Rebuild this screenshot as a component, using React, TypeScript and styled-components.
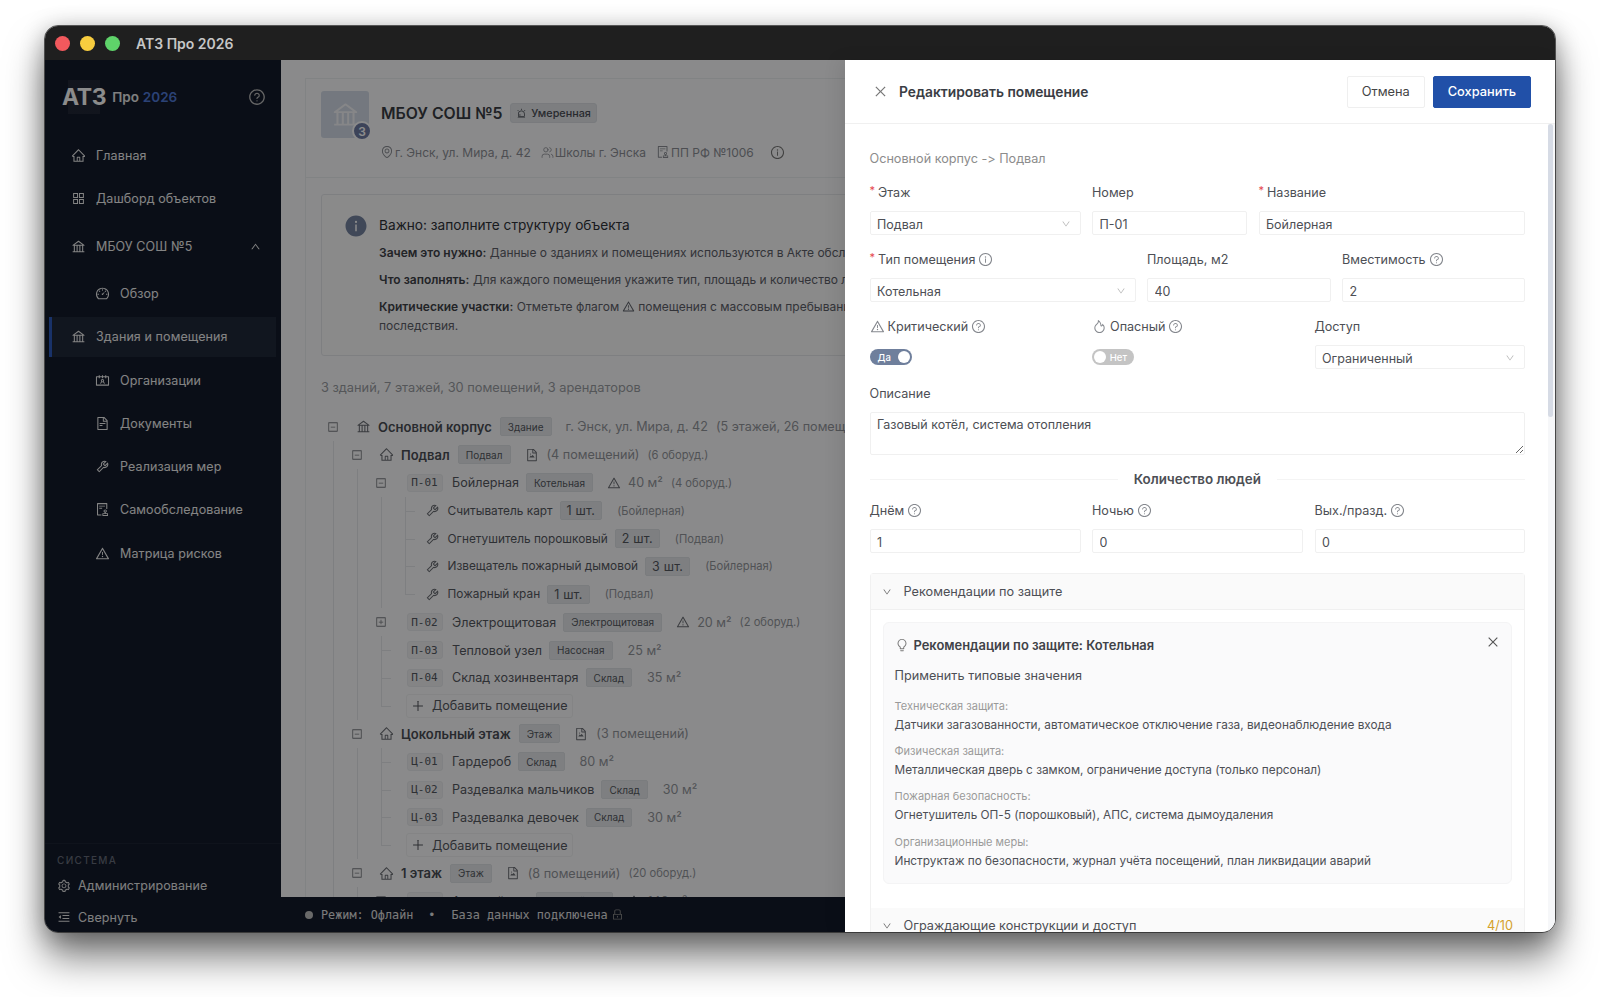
import React from 'react';
import styled, { createGlobalStyle, css } from 'styled-components';
import {
    AiFillInfoCircle,
    AiOutlineAlert,
    AiOutlineAppstore,
    AiOutlineAudit,
    AiOutlineBank,
    AiOutlineBulb,
    AiOutlineClose,
    AiOutlineContacts,
    AiOutlineDashboard,
    AiOutlineDown,
    AiOutlineEnvironment,
    AiOutlineFileImage,
    AiOutlineFileText,
    AiOutlineFire,
    AiOutlineHome,
    AiOutlineInfoCircle,
    AiOutlineLock,
    AiOutlineMenuFold,
    AiOutlineMinusSquare,
    AiOutlinePlus,
    AiOutlinePlusSquare,
    AiOutlineQuestionCircle,
    AiOutlineSetting,
    AiOutlineTool,
    AiOutlineUp,
    AiOutlineWarning,
} from 'react-icons/ai';
import { Users } from 'lucide-react';

const guide = '#e6e8eb';
const sans = 'Inter, "Noto Sans", sans-serif';
const mono = '"DejaVu Sans Mono", "Liberation Mono", monospace';

const GlobalStyle = createGlobalStyle`
    html, body { margin: 0; padding: 0; background: #fff; }
    * { box-sizing: border-box; }
    body { font-family: ${sans}; font-variant-ligatures: none; font-feature-settings: "calt" 0; overflow: hidden; }
`;

const Page = styled.div`
    width: 1600px;
    height: 997px;
    padding: 26px 45px 65px;
    background: #fff;
`;

const Window = styled.div`
    width: 100%;
    height: 100%;
    display: flex;
    flex-direction: column;
    border-radius: 13px;
    overflow: hidden;
    outline: 1px solid rgba(40, 40, 40, 0.75);
`;

const WindowShadow = styled.div`
    height: 100%;
    border-radius: 13px;
    box-shadow: 0 26px 38px rgba(0, 0, 0, 0.5), 0 4px 24px rgba(0, 0, 0, 0.32);
`;

const TitleBar = styled.div`
    height: 34px;
    flex: none;
    display: flex;
    align-items: center;
    padding-left: 10px;
    background: #1f1f1f;
    color: #c6c6c6;
    font-size: 14px;
    font-weight: 600;
`;

const Light = styled.span<{ $color: string }>`
    width: 15px;
    height: 15px;
    margin-right: 10px;
    border-radius: 50%;
    background: ${(p) => p.$color};
`;

const AppTitle = styled.span`
    margin-left: 6px;
`;

const Shell = styled.div`
    position: relative;
    flex: 1;
    min-height: 0;
    display: flex;
`;

const Sidebar = styled.aside`
    width: 236px;
    flex: none;
    display: flex;
    flex-direction: column;
    background: #131a2a;
    color: #f2f2f2;
`;

const Brand = styled.div`
    height: 75px;
    display: flex;
    align-items: center;
    padding: 0 0 2px 17px;
`;

const BrandMark = styled.span`
    font-size: 23px;
    font-weight: 700;
    letter-spacing: -0.4px;
    padding: 3px 6px 3px 0;
    color: #fff;
    background: linear-gradient(90deg, transparent 6px, rgba(255, 255, 255, 0.06) 6px, rgba(255, 255, 255, 0.06) 38px, transparent 38px);
`;

const BrandName = styled.span`
    font-size: 13.5px;
    font-weight: 600;
    color: #e8e8e8;
`;

const BrandYear = styled.span`
    margin-left: 4px;
    color: #4f79d8;
`;

const BrandHelp = styled.span`
    margin-left: auto;
    margin-right: 15px;
    display: flex;
    font-size: 18px;
    color: #bbb;
`;

const Nav = styled.nav`
    display: flex;
    flex-direction: column;
    gap: 3.3px;
`;

const NavItem = styled.div<{ $sub?: boolean; $active?: boolean; $group?: boolean }>`
    height: 40px;
    flex: none;
    display: flex;
    align-items: center;
    margin: 0 5px 0 4px;
    padding-left: ${(p) => (p.$sub ? '46px' : '22px')};
    gap: 10px;
    font-size: 12.5px;
    color: #f0f0f0;
    letter-spacing: 0.1px;

    ${(p) => p.$group && css`
        margin-top: 5.3px;
        margin-bottom: 3.3px;
    `}
    ${(p) => p.$active && css`
        background: #20283a;
        box-shadow: inset 3px 0 0 #2f5cc0;
    `}

    svg {
        flex: none;
        font-size: 15px;
    }
`;

const NavChevron = styled.span`
    margin-left: auto;
    margin-right: 15px;
    display: flex;

    svg {
        font-size: 11px;
    }
`;

const SidebarFooter = styled.div`
    margin-top: auto;
    height: 89px;
    padding: 5px 0 0 12px;
    border-top: 1px solid #1c2333;
`;

const FooterTitle = styled.div`
    height: 21px;
    display: flex;
    align-items: center;
    font-size: 10px;
    font-weight: 500;
    letter-spacing: 1.3px;
    color: #666c7a;
`;

const FooterItem = styled.div`
    height: 31.5px;
    display: flex;
    align-items: center;
    gap: 7px;
    font-size: 12.5px;
    color: #e8e8e8;
    letter-spacing: 0.1px;

    svg {
        font-size: 14px;
    }
`;

const Content = styled.div`
    flex: 1;
    min-width: 0;
    margin-right: 710px;
    overflow: hidden;
    display: flex;
    flex-direction: column;
`;

const Main = styled.main`
    flex: 1;
    min-height: 0;
    overflow: hidden;
    padding: 18px 0 0 24px;
    background: #fcfcfd;
`;

const MainCard = styled.div`
    width: 1240px;
    border: 1px solid #eceef1;
    background: #fcfcfd;
`;

const ObjectHead = styled.div`
    height: 99px;
    display: flex;
    padding: 12px 0 0 15px;
    border-bottom: 1px solid #eceef1;
`;

const ObjectIcon = styled.div`
    position: relative;
    width: 48px;
    height: 47px;
    margin-right: 12px;
    display: flex;
    align-items: center;
    justify-content: center;
    background: #d3dbe8;
    border-radius: 3px;
    color: #f4f5f7;
    font-size: 29px;
`;

const ObjectCount = styled.span`
    position: absolute;
    right: -3px;
    bottom: -3px;
    width: 20px;
    height: 20px;
    display: flex;
    align-items: center;
    justify-content: center;
    border-radius: 50%;
    background: #6d7ba3;
    border: 2px solid #fcfcfd;
    color: #fff;
    font-size: 12px;
    font-weight: 600;
`;

const ObjectInfo = styled.div`
    display: flex;
    flex-direction: column;
`;

const ObjectTitle = styled.div`
    height: 24px;
    display: flex;
    align-items: center;
    gap: 8px;
    margin-top: 10px;
    font-size: 15.8px;
    font-weight: 600;
    color: #3a3d44;
`;

const Pill = styled.span`
    height: 20px;
    display: inline-flex;
    align-items: center;
    gap: 4px;
    padding: 0 5px;
    border-radius: 3px;
    background: #e3e6ea;
    border: 1px solid #dcdfe4;
    font-size: 10.8px;
    font-weight: 500;
    color: #4a4d55;
`;

const ObjectMeta = styled.div`
    margin: 16px 0 0 -1px;
    display: flex;
    align-items: center;
    height: 22px;
    font-size: 12px;
    color: #8c8f96;
`;

const MetaItem = styled.span`
    display: inline-flex;
    align-items: center;
    gap: 1px;
    margin-right: 10px;

    svg {
        font-size: 14px;
    }
`;

const MetaInfo = styled.span`
    display: flex;
    margin-left: 6px;
    font-size: 15px;
    color: #777;
`;

const Alert = styled.div`
    margin: 16px 0 0 15px;
    width: 1200px;
    height: 162px;
    padding: 19px 0 0 22px;
    display: flex;
    border: 1px solid #e6e8ec;
    background: #fbfbfc;
    border-radius: 3px;
`;

const AlertIcon = styled.span`
    display: flex;
    margin-right: 11px;
    font-size: 24px;
    height: 24px;
    color: #7684a0;
`;

const AlertBody = styled.div`
    flex: 1;
`;

const AlertTitle = styled.div`
    height: 21px;
    display: flex;
    align-items: center;
    font-size: 13.7px;
    color: #2f3238;
`;

const AlertLine = styled.div<{ $tight?: boolean }>`
    height: 19px;
    margin-top: ${(p) => (p.$tight ? '0' : '8px')};
    display: flex;
    align-items: center;
    white-space: nowrap;
    font-size: 12px;
    color: #5d6068;

    b {
        font-weight: 600;
        color: #3f4248;
        margin-right: 3.5px;
    }

    svg {
        margin: 0 3px;
        font-size: 13px;
    }
`;

const Stats = styled.div`
    margin: 21px 0 16px 15px;
    height: 20px;
    display: flex;
    align-items: center;
    font-size: 12.8px;
    color: #9a9da3;
`;

const Tree = styled.div`
    margin-left: 20.5px;
    font-size: 12.6px;
    color: #55585f;
`;

const Row = styled.div`
    height: 27.9px;
    display: flex;
    align-items: center;
    white-space: nowrap;
`;

const Switcher = styled.span<{ $leaf?: boolean; $last?: boolean; $gap: number }>`
    position: relative;
    width: 12px;
    flex: none;
    align-self: stretch;
    margin-right: ${(p) => p.$gap}px;
    display: flex;
    align-items: center;
    justify-content: center;
    font-size: 14px;
    color: #777a80;

    ${(p) => p.$leaf && css`
        &::before {
            content: '';
            position: absolute;
            left: 6px;
            top: 0;
            bottom: ${p.$last ? '50%' : '0'};
            border-left: 1px solid ${guide};
        }
        &::after {
            content: '';
            position: absolute;
            left: 6px;
            top: 50%;
            width: 10px;
            border-top: 1px solid ${guide};
        }
    `}
`;

const Branch = styled.div`
    margin-left: 6px;
    padding-left: 17px;
    border-left: 1px solid ${guide};
`;

const NodeIcon = styled.span<{ $gap?: number }>`
    display: flex;
    font-size: 15px;
    color: #6a6d74;
    margin-right: ${(p) => p.$gap ?? 7}px;
`;

const NodeName = styled.span<{ $strong?: boolean; $small?: boolean }>`
    font-weight: ${(p) => (p.$strong ? 600 : 400)};
    font-size: ${(p) => (p.$small ? '11.85px' : p.$strong ? '13px' : 'inherit')};
    color: ${(p) => (p.$strong ? '#4a4d55' : '#55585f')};
    margin-right: ${(p) => (p.$strong ? 8 : 7)}px;
`;

const Code = styled.span`
    width: 36px;
    height: 18px;
    flex: none;
    display: flex;
    align-items: center;
    justify-content: center;
    margin-left: -0.5px;
    margin-right: 9.5px;
    border: 1px solid #e9ebee;
    border-radius: 3px;
    background: #f0f1f3;
    font-family: ${mono};
    font-size: 11px;
    color: #55585f;
`;

const Tag = styled.span`
    height: 19px;
    display: inline-flex;
    align-items: center;
    padding: 0 7px;
    border: 1px solid #dfe2e6;
    border-radius: 2px;
    background: #e6e8ec;
    font-size: 10px;
    color: #55585f;
`;

const Count = styled(Tag)`
    padding: 0 6px;
    font-size: 12.5px;
    letter-spacing: 0.2px;
`;

const Muted = styled.span<{ $small?: boolean; $gap?: number }>`
    display: inline-flex;
    align-items: center;
    margin-left: ${(p) => p.$gap ?? 0}px;
    font-size: ${(p) => (p.$small ? '11.2px' : '12.6px')};
    color: #93969c;
`;

const InlineIcon = styled.span<{ $gap?: number }>`
    display: flex;
    margin-left: ${(p) => p.$gap ?? 14}px;
    font-size: 14px;
    color: #6a6d74;
`;

const AddRoom = styled.span`
    height: 24px;
    display: inline-flex;
    align-items: center;
    gap: 7px;
    margin-left: -1px;
    padding: 0 4px;
    border: 1px solid #f0f1f3;
    border-radius: 3px;
    color: #55585f;

    svg {
        font-size: 14px;
    }
`;

const StatusBar = styled.footer`
    height: 35px;
    flex: none;
    display: flex;
    align-items: center;
    padding-left: 24px;
    background: #131a2a;
    color: #e0e0e0;
    font-family: ${mono};
    font-size: 11.8px;
`;

const StatusDot = styled.span`
    width: 8px;
    height: 8px;
    margin-right: 8px;
    border-radius: 50%;
    background: #c0c0c0;
`;

const StatusSep = styled.span`
    margin: 0 16px 0 15px;
`;

const StatusLock = styled.span`
    display: flex;
    margin-left: 3px;
    font-size: 13px;
    color: #888;
`;

const Mask = styled.div`
    position: absolute;
    inset: 0;
    background: rgba(0, 0, 0, 0.45);
`;

const Drawer = styled.section`
    position: absolute;
    top: 0;
    right: 0;
    bottom: 0;
    width: 710px;
    display: flex;
    flex-direction: column;
    background: #fff;
    box-shadow: -6px 0 16px rgba(0, 0, 0, 0.08);
`;

const DrawerHead = styled.header`
    height: 64px;
    flex: none;
    display: flex;
    align-items: center;
    padding: 0 24px 0 27.5px;
    border-bottom: 1px solid #f0f0f0;
`;

const DrawerClose = styled.span`
    display: flex;
    margin-right: 11.5px;
    font-size: 15px;
    color: #777;
`;

const DrawerTitle = styled.div`
    flex: 1;
    font-size: 13.8px;
    font-weight: 600;
    color: #3a3d44;
`;

const Button = styled.button<{ $primary?: boolean }>`
    height: 32px;
    margin-left: 8px;
    padding: 0 14px;
    border: 1px solid ${(p) => (p.$primary ? '#2150a8' : '#efefef')};
    border-radius: 2px;
    background: ${(p) => (p.$primary ? '#2150a8' : '#fff')};
    color: ${(p) => (p.$primary ? '#fff' : '#444')};
    font-family: ${sans};
    font-size: 12.8px;
    font-weight: ${(p) => (p.$primary ? 500 : 400)};
`;

const DrawerBody = styled.div`
    position: relative;
    flex: 1;
    min-height: 0;
    overflow: hidden;
    padding: 24px 30px 0 24.5px;
`;

const ScrollTrack = styled.div`
    position: absolute;
    top: 0;
    right: 0;
    bottom: 0;
    width: 7px;
    background: #f6f7f9;
`;

const ScrollThumb = styled.div`
    height: 293px;
    width: 5px;
    border-radius: 3px;
    background: #d6dbe5;
`;

const Crumbs = styled.div`
    height: 20px;
    margin-bottom: 14px;
    display: flex;
    align-items: center;
    font-size: 12.65px;
    color: #8c8c8c;
`;

const FormRow = styled.div<{ $columns: string }>`
    display: grid;
    grid-template-columns: ${(p) => p.$columns};
    column-gap: 11.5px;
    margin-bottom: 14px;
`;

const Field = styled.div`
    display: flex;
    flex-direction: column;
    gap: 9px;
`;

const Label = styled.div`
    height: 20px;
    display: flex;
    align-items: center;
    gap: 3px;
    font-size: 12.6px;
    color: #4d4f55;

    svg {
        font-size: 15px;
        color: #85888e;
    }
`;

const Required = styled.span`
    margin-bottom: 5px;
    font-size: 11px;
    color: #e5484d;
`;

const controlStyle = css`
    width: 100%;
    height: 24px;
    padding: 2px 6.5px 0;
    border: 1px solid #f0f0f0;
    border-radius: 2px;
    background: #fff;
    font-family: ${sans};
    font-size: 12.5px;
    color: #4d4f55;
    outline: none;
`;

const Input = styled.input`
    ${controlStyle}
`;

const SelectBox = styled.div`
    ${controlStyle}
    display: flex;
    align-items: center;
    justify-content: space-between;
    padding-right: 9px;

    svg {
        font-size: 10px;
        color: #b5b5b5;
    }
`;

const TextArea = styled.textarea`
    ${controlStyle}
    display: block;
    height: 43px;
    padding-top: 3px;
    line-height: 18px;
    resize: vertical;
`;

const SwitchSlot = styled.div`
    height: 24px;
    display: flex;
    align-items: center;
`;

const Switch = styled.span<{ $on?: boolean }>`
    width: 42px;
    height: 16px;
    display: flex;
    flex-direction: ${(p) => (p.$on ? 'row' : 'row-reverse')};
    align-items: center;
    justify-content: space-between;
    padding: 0 2px 0 ${(p) => (p.$on ? '8px' : '2px')};
    border-radius: 8px;
    background: ${(p) => (p.$on ? '#6f7f9c' : '#c4c4c4')};
    font-size: 9.5px;
    font-weight: 500;
    color: #fff;

    &::after {
        content: '';
        width: 12px;
        height: 12px;
        border-radius: 50%;
        background: #fff;
    }
`;

const SwitchText = styled.span<{ $on?: boolean }>`
    margin-right: ${(p) => (p.$on ? '0' : '5px')};
`;

const Divider = styled.div`
    height: 20px;
    margin: 0 0 11px;
    display: flex;
    align-items: center;
    gap: 16px;
    font-size: 13.4px;
    font-weight: 600;
    color: #4d4f55;

    &::before, &::after {
        content: '';
        flex: 1;
        border-top: 1px solid #f4f4f4;
    }
`;

const Collapse = styled.div`
    margin-top: 20px;
    border: 1px solid #f1f1f1;
    border-bottom: 0;
    border-radius: 4px 4px 0 0;
`;

const CollapseHead = styled.div`
    height: 36px;
    display: flex;
    align-items: center;
    gap: 11.5px;
    padding: 0 11px 0 11.5px;
    background: #fafafa;
    border-bottom: 1px solid #f0f0f0;
    font-size: 12.7px;
    color: #4d4f55;

    svg {
        font-size: 10px;
        color: #666;
    }
`;

const CollapseNote = styled.span`
    margin-left: auto;
    color: #d4a12a;
`;

const CollapseContent = styled.div`
    padding: 12px 12px 24px;
`;

const AdviceCard = styled.div`
    position: relative;
    height: 262px;
    padding: 11px 11px 0;
    border: 1px solid #f4f4f5;
    border-radius: 6px;
    background: #fafafb;
`;

const AdviceClose = styled.span`
    position: absolute;
    top: 12px;
    right: 11px;
    display: flex;
    font-size: 14px;
    color: #555;
`;

const AdviceTitle = styled.div`
    height: 22px;
    display: flex;
    align-items: center;
    gap: 5px;
    font-size: 12.9px;
    font-weight: 600;
    color: #3f4248;

    svg {
        font-size: 14px;
        font-weight: 400;
        color: #777;
    }
`;

const AdviceApply = styled.div`
    height: 20px;
    margin: 9px 0 11px;
    display: flex;
    align-items: center;
    font-size: 12.7px;
    color: #4d4f55;
`;

const AdviceBlock = styled.div`
    height: 45.4px;
`;

const AdviceLabel = styled.div`
    height: 19px;
    display: flex;
    align-items: center;
    font-size: 11px;
    color: #9a9a9a;
`;

const AdviceValue = styled.div`
    height: 19px;
    display: flex;
    align-items: center;
    font-size: 11.8px;
    color: #4d4f55;
`;

const navTop = [
    { icon: <AiOutlineHome />, label: 'Главная' },
    { icon: <AiOutlineAppstore />, label: 'Дашборд объектов' },
];

const navSub = [
    { icon: <AiOutlineContacts />, label: 'Организации' },
    { icon: <AiOutlineFileText />, label: 'Документы' },
    { icon: <AiOutlineTool />, label: 'Реализация мер' },
    { icon: <AiOutlineAudit />, label: 'Самообследование' },
    { icon: <AiOutlineWarning />, label: 'Матрица рисков' },
];

const equipment = [
    { name: 'Считыватель карт', count: '1 шт.', place: '(Бойлерная)' },
    { name: 'Огнетушитель порошковый', count: '2 шт.', place: '(Подвал)' },
    { name: 'Извещатель пожарный дымовой', count: '3 шт.', place: '(Бойлерная)' },
    { name: 'Пожарный кран', count: '1 шт.', place: '(Подвал)' },
];

const advice = [
    { label: 'Техническая защита:', value: 'Датчики загазованности, автоматическое отключение газа, видеонаблюдение входа' },
    { label: 'Физическая защита:', value: 'Металлическая дверь с замком, ограничение доступа (только персонал)' },
    { label: 'Пожарная безопасность:', value: 'Огнетушитель ОП-5 (порошковый), АПС, система дымоудаления' },
    { label: 'Организационные меры:', value: 'Инструктаж по безопасности, журнал учёта посещений, план ликвидации аварий' },
];

const Room = ({ code, name, tag, area, last }: { code: string; name: string; tag: string; area: string; last?: boolean }) => (
    <Row>
        <Switcher $leaf $last={last} $gap={20.5} />
        <Code>{code}</Code>
        <NodeName>{name}</NodeName>
        <Tag>{tag}</Tag>
        <Muted $gap={15}>{area}</Muted>
    </Row>
);

const AddRoomRow = () => (
    <Row>
        <Switcher $leaf $last $gap={20.5} />
        <AddRoom><AiOutlinePlus />Добавить помещение</AddRoom>
    </Row>
);

const FloorRow = ({ name, tag, rooms, extra }: { name: string; tag: string; rooms: string; extra?: string }) => (
    <Row>
        <Switcher $gap={16.5}><AiOutlineMinusSquare /></Switcher>
        <NodeIcon><AiOutlineHome /></NodeIcon>
        <NodeName $strong>{name}</NodeName>
        <Tag>{tag}</Tag>
        <InlineIcon><AiOutlineFileImage /></InlineIcon>
        <Muted $gap={8}>{rooms}</Muted>
        {extra && <Muted $small $gap={8}>{extra}</Muted>}
    </Row>
);

const ObjectTree = () => (
    <Tree>
        <Row>
            <Switcher $gap={17.5}><AiOutlineMinusSquare /></Switcher>
            <NodeIcon><AiOutlineBank /></NodeIcon>
            <NodeName $strong>Основной корпус</NodeName>
            <Tag>Здание</Tag>
            <Muted $gap={14}>г. Энск, ул. Мира, д. 42</Muted>
            <Muted $gap={8}>(5 этажей, 26 помещений)</Muted>
        </Row>
        <Branch>
            <FloorRow name="Подвал" tag="Подвал" rooms="(4 помещений)" extra="(6 оборуд.)" />
            <Branch>
                <Row>
                    <Switcher $gap={20.5}><AiOutlineMinusSquare /></Switcher>
                    <Code>П-01</Code>
                    <NodeName>Бойлерная</NodeName>
                    <Tag>Котельная</Tag>
                    <InlineIcon><AiOutlineWarning /></InlineIcon>
                    <Muted $gap={7}>40 м²</Muted>
                    <Muted $small $gap={8}>(4 оборуд.)</Muted>
                </Row>
                <Branch>
                    {equipment.map((item, i) => (
                        <Row key={item.name}>
                            <Switcher $leaf $last={i === equipment.length - 1} $gap={14} />
                            <NodeIcon $gap={8}><AiOutlineTool /></NodeIcon>
                            <NodeName $small>{item.name}</NodeName>
                            <Count>{item.count}</Count>
                            <Muted $small $gap={15}>{item.place}</Muted>
                        </Row>
                    ))}
                </Branch>
                <Row>
                    <Switcher $gap={20.5}><AiOutlinePlusSquare /></Switcher>
                    <Code>П-02</Code>
                    <NodeName>Электрощитовая</NodeName>
                    <Tag>Электрощитовая</Tag>
                    <InlineIcon><AiOutlineWarning /></InlineIcon>
                    <Muted $gap={7}>20 м²</Muted>
                    <Muted $small $gap={8}>(2 оборуд.)</Muted>
                </Row>
                <Room code="П-03" name="Тепловой узел" tag="Насосная" area="25 м²" />
                <Room code="П-04" name="Склад хозинвентаря" tag="Склад" area="35 м²" />
                <AddRoomRow />
            </Branch>
            <FloorRow name="Цокольный этаж" tag="Этаж" rooms="(3 помещений)" />
            <Branch>
                <Room code="Ц-01" name="Гардероб" tag="Склад" area="80 м²" />
                <Room code="Ц-02" name="Раздевалка мальчиков" tag="Склад" area="30 м²" />
                <Room code="Ц-03" name="Раздевалка девочек" tag="Склад" area="30 м²" />
                <AddRoomRow />
            </Branch>
            <FloorRow name="1 этаж" tag="Этаж" rooms="(8 помещений)" extra="(20 оборуд.)" />
            <Branch>
                <Row>
                    <Switcher $gap={20.5}><AiOutlineMinusSquare /></Switcher>
                    <Code>1-01</Code>
                    <NodeName>Актовый зал</NodeName>
                    <Tag>Актовый зал</Tag>
                    <InlineIcon><AiOutlineWarning /></InlineIcon>
                    <Muted $gap={7}>140 м²</Muted>
                </Row>
            </Branch>
        </Branch>
    </Tree>
);

const EditDrawer = () => (
    <Drawer>
        <DrawerHead>
            <DrawerClose><AiOutlineClose /></DrawerClose>
            <DrawerTitle>Редактировать помещение</DrawerTitle>
            <Button>Отмена</Button>
            <Button $primary>Сохранить</Button>
        </DrawerHead>
        <DrawerBody>
            <Crumbs>Основной корпус -&gt; Подвал</Crumbs>
            <FormRow $columns="211px 155px 1fr">
                <Field>
                    <Label><Required>*</Required>Этаж</Label>
                    <SelectBox>Подвал<AiOutlineDown /></SelectBox>
                </Field>
                <Field>
                    <Label>Номер</Label>
                    <Input defaultValue="П-01" />
                </Field>
                <Field>
                    <Label><Required>*</Required>Название</Label>
                    <Input defaultValue="Бойлерная" />
                </Field>
            </FormRow>
            <FormRow $columns="266px 183.5px 1fr">
                <Field>
                    <Label><Required>*</Required>Тип помещения <AiOutlineInfoCircle /></Label>
                    <SelectBox>Котельная<AiOutlineDown /></SelectBox>
                </Field>
                <Field>
                    <Label>Площадь, м2</Label>
                    <Input defaultValue="40" />
                </Field>
                <Field>
                    <Label>Вместимость <AiOutlineQuestionCircle /></Label>
                    <Input defaultValue="2" />
                </Field>
            </FormRow>
            <FormRow $columns="211px 211px 1fr">
                <Field>
                    <Label><AiOutlineWarning />Критический <AiOutlineQuestionCircle /></Label>
                    <SwitchSlot><Switch $on><SwitchText $on>Да</SwitchText></Switch></SwitchSlot>
                </Field>
                <Field>
                    <Label><AiOutlineFire />Опасный <AiOutlineQuestionCircle /></Label>
                    <SwitchSlot><Switch><SwitchText>Нет</SwitchText></Switch></SwitchSlot>
                </Field>
                <Field>
                    <Label>Доступ</Label>
                    <SelectBox>Ограниченный<AiOutlineDown /></SelectBox>
                </Field>
            </FormRow>
            <FormRow $columns="1fr">
                <Field>
                    <Label>Описание</Label>
                    <TextArea defaultValue="Газовый котёл, система отопления" />
                </Field>
            </FormRow>
            <Divider>Количество людей</Divider>
            <FormRow $columns="211px 211px 1fr">
                <Field>
                    <Label>Днём <AiOutlineQuestionCircle /></Label>
                    <Input defaultValue="1" />
                </Field>
                <Field>
                    <Label>Ночью <AiOutlineQuestionCircle /></Label>
                    <Input defaultValue="0" />
                </Field>
                <Field>
                    <Label>Вых./празд. <AiOutlineQuestionCircle /></Label>
                    <Input defaultValue="0" />
                </Field>
            </FormRow>
            <Collapse>
                <CollapseHead><AiOutlineDown />Рекомендации по защите</CollapseHead>
                <CollapseContent>
                    <AdviceCard>
                        <AdviceClose><AiOutlineClose /></AdviceClose>
                        <AdviceTitle><AiOutlineBulb />Рекомендации по защите: Котельная</AdviceTitle>
                        <AdviceApply>Применить типовые значения</AdviceApply>
                        {advice.map((item) => (
                            <AdviceBlock key={item.label}>
                                <AdviceLabel>{item.label}</AdviceLabel>
                                <AdviceValue>{item.value}</AdviceValue>
                            </AdviceBlock>
                        ))}
                    </AdviceCard>
                </CollapseContent>
                <CollapseHead>
                    <AiOutlineDown />Ограждающие конструкции и доступ
                    <CollapseNote>4/10</CollapseNote>
                </CollapseHead>
            </Collapse>
            <ScrollTrack><ScrollThumb /></ScrollTrack>
        </DrawerBody>
    </Drawer>
);

const App = () => (
    <>
        <GlobalStyle />
        <Page>
            <WindowShadow>
                <Window>
                    <TitleBar>
                        <Light $color="#f2595d" />
                        <Light $color="#f8cd3f" />
                        <Light $color="#5fd36a" />
                        <AppTitle>АТЗ Про 2026</AppTitle>
                    </TitleBar>
                    <Shell>
                        <Sidebar>
                            <Brand>
                                <BrandMark>АТЗ</BrandMark>
                                <BrandName>Про<BrandYear>2026</BrandYear></BrandName>
                                <BrandHelp><AiOutlineQuestionCircle /></BrandHelp>
                            </Brand>
                            <Nav>
                                {navTop.map((item) => (
                                    <NavItem key={item.label}>{item.icon}{item.label}</NavItem>
                                ))}
                                <NavItem $group>
                                    <AiOutlineBank />МБОУ СОШ №5
                                    <NavChevron><AiOutlineUp /></NavChevron>
                                </NavItem>
                                <NavItem $sub><AiOutlineDashboard />Обзор</NavItem>
                                <NavItem $active><AiOutlineBank />Здания и помещения</NavItem>
                                {navSub.map((item) => (
                                    <NavItem $sub key={item.label}>{item.icon}{item.label}</NavItem>
                                ))}
                            </Nav>
                            <SidebarFooter>
                                <FooterTitle>СИСТЕМА</FooterTitle>
                                <FooterItem><AiOutlineSetting />Администрирование</FooterItem>
                                <FooterItem><AiOutlineMenuFold />Свернуть</FooterItem>
                            </SidebarFooter>
                        </Sidebar>
                        <Content>
                            <Main>
                                <MainCard>
                                    <ObjectHead>
                                        <ObjectIcon>
                                            <AiOutlineBank />
                                            <ObjectCount>3</ObjectCount>
                                        </ObjectIcon>
                                        <ObjectInfo>
                                            <ObjectTitle>
                                                МБОУ СОШ №5
                                                <Pill><AiOutlineAlert />Умеренная</Pill>
                                            </ObjectTitle>
                                            <ObjectMeta>
                                                <MetaItem><AiOutlineEnvironment />г. Энск, ул. Мира, д. 42</MetaItem>
                                                <MetaItem><Users size={13} strokeWidth={1.5} />Школы г. Энска</MetaItem>
                                                <MetaItem><AiOutlineAudit />ПП РФ №1006</MetaItem>
                                                <MetaInfo><AiOutlineInfoCircle /></MetaInfo>
                                            </ObjectMeta>
                                        </ObjectInfo>
                                    </ObjectHead>
                                    <Alert>
                                        <AlertIcon><AiFillInfoCircle /></AlertIcon>
                                        <AlertBody>
                                            <AlertTitle>Важно: заполните структуру объекта</AlertTitle>
                                            <AlertLine><b>Зачем это нужно:</b> Данные о зданиях и помещениях используются в Акте обследования</AlertLine>
                                            <AlertLine><b>Что заполнять:</b> Для каждого помещения укажите тип, площадь и количество людей</AlertLine>
                                            <AlertLine><b>Критические участки:</b> Отметьте флагом <AiOutlineWarning /> помещения с массовым пребыванием людей</AlertLine>
                                            <AlertLine $tight>последствия.</AlertLine>
                                        </AlertBody>
                                    </Alert>
                                    <Stats>3 зданий, 7 этажей, 30 помещений, 3 арендаторов</Stats>
                                    <ObjectTree />
                                </MainCard>
                            </Main>
                            <StatusBar>
                                <StatusDot />
                                Режим: Офлайн
                                <StatusSep>•</StatusSep>
                                База данных подключена
                                <StatusLock><AiOutlineLock /></StatusLock>
                            </StatusBar>
                        </Content>
                        <Mask />
                        <EditDrawer />
                    </Shell>
                </Window>
            </WindowShadow>
        </Page>
    </>
);

export default App;
